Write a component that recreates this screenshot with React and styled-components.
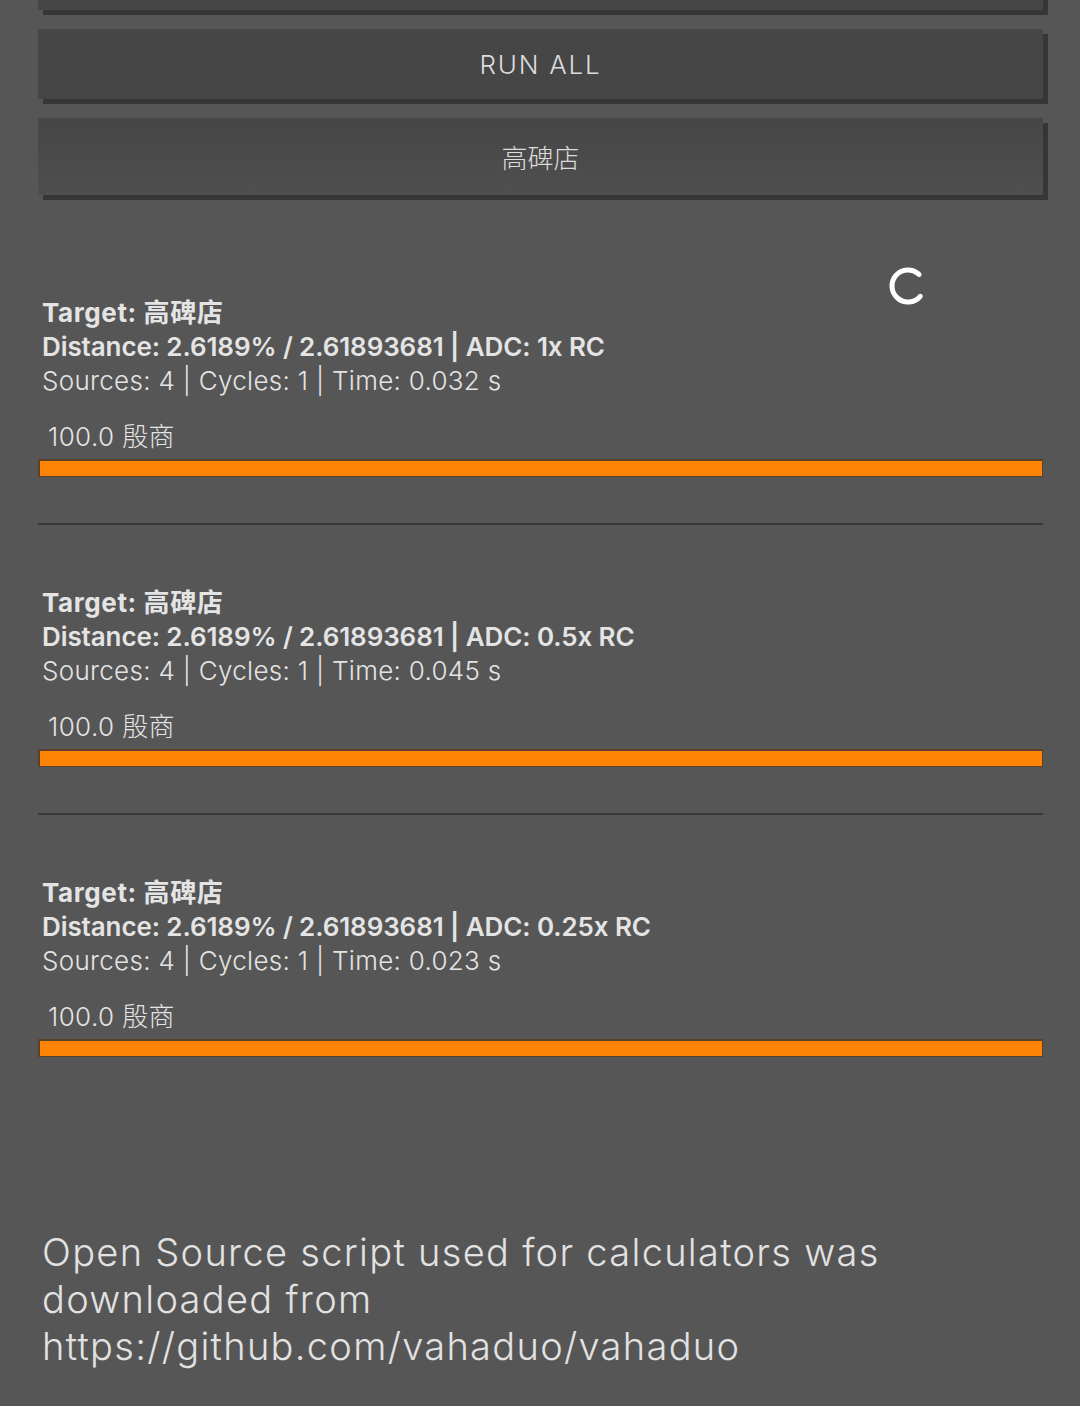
import React from "react";
import styled, { createGlobalStyle } from "styled-components";

const GlobalStyle = createGlobalStyle`
  html, body {
    margin: 0;
    padding: 0;
    background: #565656;
  }
  body {
    font-family: Inter, "Noto Sans CJK SC", sans-serif;
    color: #e4e4e4;
    overflow: hidden;
  }
`;

const Page = styled.div`
  width: 1080px;
  height: 1406px;
  padding: 0 37px 0 38px;
  box-sizing: border-box;
  background: #565656;
  overflow: hidden;
`;

const ButtonStack = styled.div`
  display: flex;
  flex-direction: column;
  gap: 19px;
  margin-top: -60px;
`;

const Button = styled.button`
  display: flex;
  align-items: center;
  justify-content: center;
  width: 1005px;
  height: ${(p) => p.h || 70}px;
  border: none;
  border-radius: 0;
  padding: 0;
  background: ${(p) =>
    p.gradient ? "linear-gradient(#464646, #4f4f4f)" : "#464646"};
  box-shadow: 5px 5px 0 #363636;
  color: #dcdcdc;
  font-family: Inter, "Noto Sans CJK SC", sans-serif;
  font-weight: 300;
  font-size: 26px;
  letter-spacing: ${(p) => (p.gradient ? 0 : 1.8)}px;
  cursor: pointer;
`;

const Results = styled.div`
  position: relative;
  padding-top: 101px;
`;

const Spinner = styled.svg`
  position: absolute;
  left: 848px;
  top: 69px;
  width: 44px;
  height: 44px;
`;

const Block = styled.div`
  display: flex;
  flex-direction: column;
`;

const spacing = { 700: 0.6, 600: -0.1, 300: 0.3 };

const Line = styled.div`
  padding-left: 4px;
  font-size: 26px;
  line-height: 34px;
  font-weight: ${(p) => p.w || 300};
  letter-spacing: ${(p) => spacing[p.w || 300]}px;
  white-space: nowrap;
`;

const BarLabel = styled.div`
  margin-top: 22px;
  padding-left: 10px;
  font-size: 26px;
  line-height: 34px;
  font-weight: 300;
  letter-spacing: 0.4px;
`;

const BarTrack = styled.div`
  margin-top: 5px;
  width: 1005px;
  height: 18px;
  box-sizing: border-box;
  background: #5a4128;
  padding: 2px 1px 1px 2px;
`;

const BarFill = styled.div`
  height: 100%;
  background: #ff8405;
`;

const Divider = styled.hr`
  margin: 46px 0 61px;
  width: 1005px;
  border: none;
  height: 2px;
  background: #383838;
`;

const Footer = styled.div`
  margin-top: 172px;
  padding-left: 4px;
  font-size: 38px;
  line-height: 47px;
  font-weight: 300;
  letter-spacing: 1.3px;
  color: #e2e2e2;
`;

const results = [
  { adc: "1x", time: "0.032" },
  { adc: "0.5x", time: "0.045" },
  { adc: "0.25x", time: "0.023" },
];

const App = () => {
  return (
    <Page>
      <GlobalStyle />
      <ButtonStack>
        <Button>&nbsp;</Button>
        <Button>RUN ALL</Button>
        <Button h={77} gradient>
          高碑店
        </Button>
      </ButtonStack>
      <Results>
        <Spinner viewBox="0 0 44 44">
          <circle
            cx="22"
            cy="22"
            r="16"
            fill="none"
            stroke="#ffffff"
            strokeWidth="5"
            strokeLinecap="round"
            strokeDasharray="76 100"
            transform="rotate(40 22 22)"
          />
        </Spinner>
        {results.map((item, index) => (
          <Block key={index}>
            <Line w={700}>Target: 高碑店</Line>
            <Line w={600}>
              Distance: 2.6189% / 2.61893681 | ADC: {item.adc} RC
            </Line>
            <Line>Sources: 4 | Cycles: 1 | Time: {item.time} s</Line>
            <BarLabel>100.0 殷商</BarLabel>
            <BarTrack>
              <BarFill style={{ width: "100%" }} />
            </BarTrack>
            {index < results.length - 1 && <Divider />}
          </Block>
        ))}
      </Results>
      <Footer>
        Open Source script used for calculators was
        <br />
        downloaded from
        <br />
        https://github.com/vahaduo/vahaduo
      </Footer>
    </Page>
  );
};

export default App;
